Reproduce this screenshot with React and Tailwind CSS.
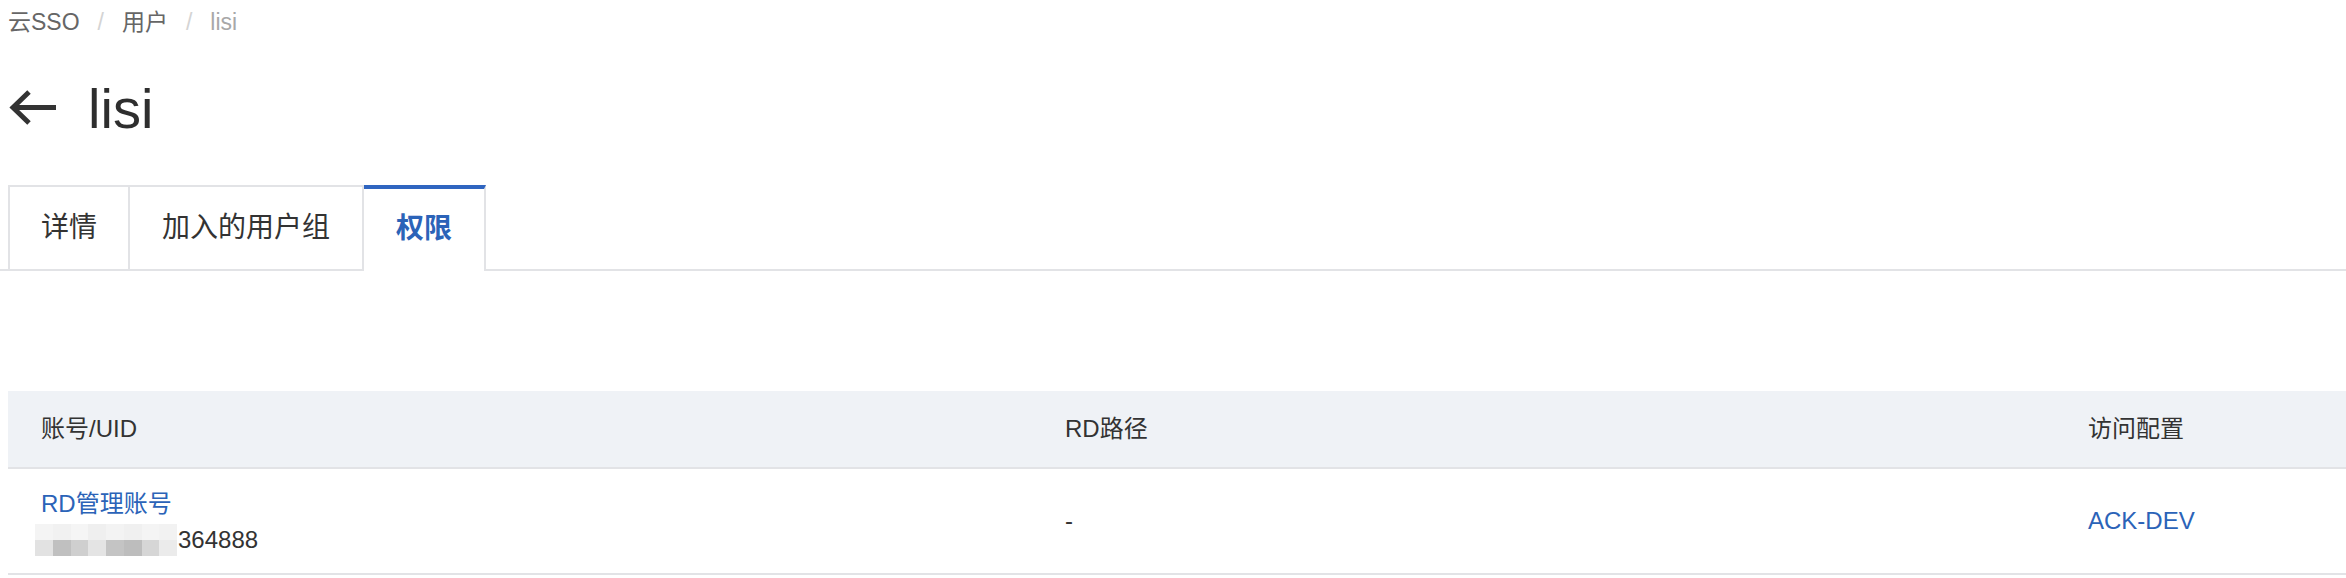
import React from 'react'

const font = { fontFamily: '"Liberation Sans", "Noto Sans CJK SC", sans-serif' }

const mosaicTop = ['#f4f4f4', '#f1f1f1', '#f5f5f5', '#efefef', '#f3f3f3', '#f0f0f0', '#f4f4f4', '#f2f2f2']
const mosaicBottom = ['#e2e2e2', '#c0c0c0', '#cfcfcf', '#e4e4e4', '#c4c4c4', '#bdbdbd', '#d6d6d6', '#ebebeb']

const Mosaic = () => (
  <div className="flex flex-col w-[142px] h-[32px] mr-px">
    <div className="flex h-[16px]">
      {mosaicTop.map((c, i) => (
        <div key={i} className="flex-1" style={{ backgroundColor: c }} />
      ))}
    </div>
    <div className="flex h-[16px]">
      {mosaicBottom.map((c, i) => (
        <div key={i} className="flex-1" style={{ backgroundColor: c }} />
      ))}
    </div>
  </div>
)

const App = () => {
  return (
    <div className="bg-white w-[2346px] h-[578px] overflow-hidden text-[#333]" style={font}>
      {/* breadcrumb */}
      <div className="flex items-center h-[40px] pl-[8px] pt-[4px] text-[23px] text-[#666]">
        <span>云SSO</span>
        <span className="mx-[18px] text-[#d4d4d4]">/</span>
        <span>用户</span>
        <span className="mx-[18px] text-[#d4d4d4]">/</span>
        <span className="text-[#a8a8a8]">lisi</span>
      </div>

      {/* title */}
      <div className="flex items-center h-[104px] mt-[17px] pl-[8px]">
        <svg width="50" height="40" viewBox="0 0 50 40" className="shrink-0">
          <path d="M48 18.5 H5 M21 3 L5 18.5 L21 34" fill="none" stroke="#333" strokeWidth="5" />
        </svg>
        <h1 className="ml-[30px] text-[56px] leading-none text-[#2e2e2e]">lisi</h1>
      </div>

      {/* tabs */}
      <div className="flex pl-[8px] mt-[24px] border-b-2 border-[#e2e3e6]">
        <div className="h-[86px] px-[31px] flex items-center text-[28px] border-2 border-[#e2e3e6] -mb-[2px]">
          详情
        </div>
        <div className="h-[86px] px-[32px] flex items-center text-[28px] border-y-2 border-r-2 border-[#e2e3e6] -mb-[2px]">
          加入的用户组
        </div>
        <div className="h-[86px] px-[32px] flex items-center text-[28px] font-bold text-[#2b63b8] border-t-4 border-t-[#2f65c0] border-r-2 border-[#e2e3e6] bg-white -mb-[2px] pb-[2px]">
          权限
        </div>
      </div>

      {/* table */}
      <div className="ml-[8px] mt-[120px] text-[24px]">
        <div className="grid grid-cols-[1024px_1023px_1fr] h-[78px] bg-[#eff2f6] border-b-2 border-[#e2e3e6] items-center">
          <div className="pl-[33px]">账号/UID</div>
          <div className="pl-[33px]">RD路径</div>
          <div className="pl-[33px]">访问配置</div>
        </div>
        <div className="grid grid-cols-[1024px_1023px_1fr] h-[106px] border-b-2 border-[#e2e3e6] items-center">
          <div className="pl-[33px] leading-[36px] pt-[2px]">
            <div className="text-[#2b63b8]">RD管理账号</div>
            <div className="flex items-center -ml-[6px]">
              <Mosaic />
              <span>364888</span>
            </div>
          </div>
          <div className="pl-[33px]">-</div>
          <div className="pl-[33px] text-[#2b63b8]">ACK-DEV</div>
        </div>
      </div>
    </div>
  )
}

export default App
